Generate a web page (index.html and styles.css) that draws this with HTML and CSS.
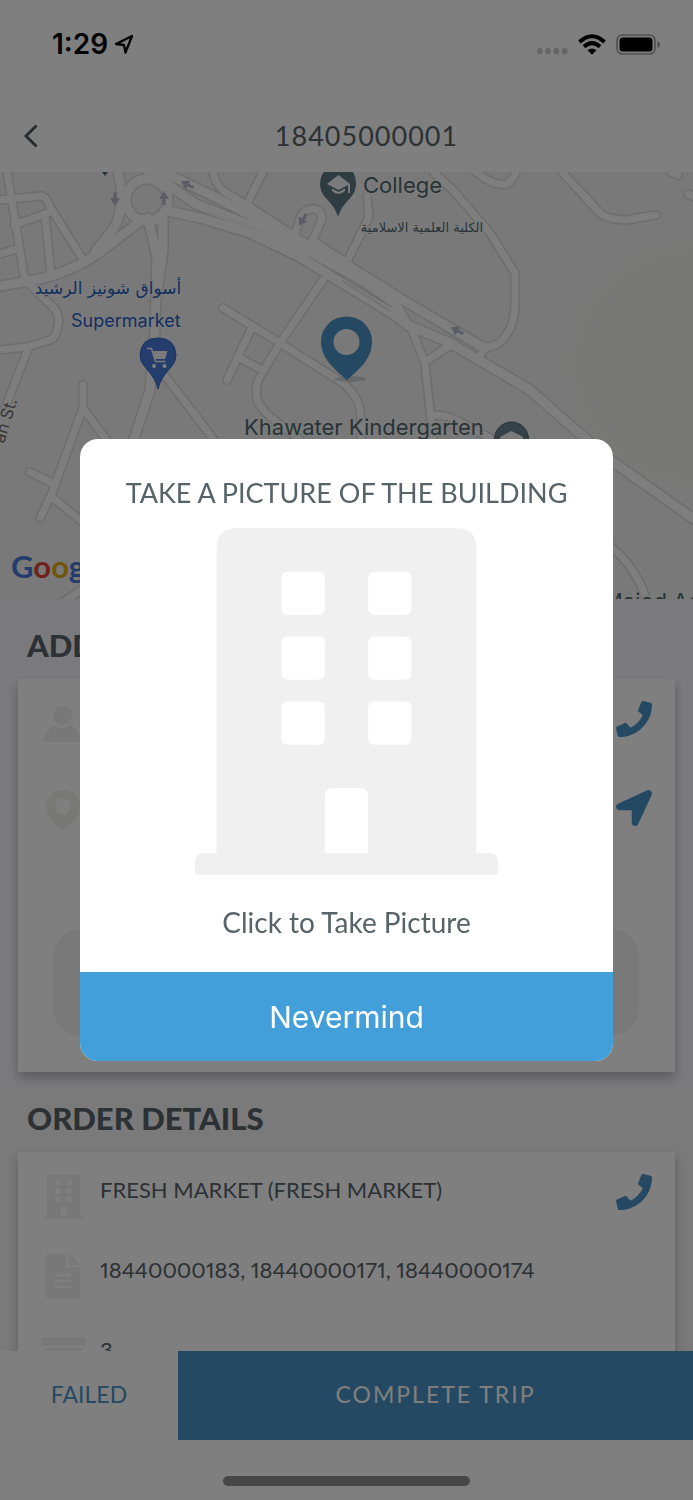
FILE: index.html
```html
<!DOCTYPE html>
<html lang="en">
<head>
<meta charset="utf-8">
<meta name="viewport" content="width=device-width, initial-scale=1">
<title>Trip 18405000001</title>
<link rel="stylesheet" href="styles.css">
</head>
<body>
<svg class="defs" aria-hidden="true">
  <defs>
    <symbol id="building" viewBox="0 0 14 16"><path fill-rule="evenodd" d="M1 15V.9Q1 0 1.9 0H12.1Q13 0 13 .9V15H13.6Q14 15 14 15.4V16H0V15.4Q0 15 .4 15ZM4.3 2Q4 2 4 2.3V3.7Q4 4 4.3 4H5.7Q6 4 6 3.7V2.3Q6 2 5.7 2ZM8.3 2Q8 2 8 2.3V3.7Q8 4 8.3 4H9.7Q10 4 10 3.7V2.3Q10 2 9.7 2ZM4.3 5Q4 5 4 5.3V6.7Q4 7 4.3 7H5.7Q6 7 6 6.7V5.3Q6 5 5.7 5ZM8.3 5Q8 5 8 5.3V6.7Q8 7 8.3 7H9.7Q10 7 10 6.7V5.3Q10 5 9.7 5ZM4.3 8Q4 8 4 8.3V9.7Q4 10 4.3 10H5.7Q6 10 6 9.7V8.3Q6 8 5.7 8ZM8.3 8Q8 8 8 8.3V9.7Q8 10 8.3 10H9.7Q10 10 10 9.7V8.3Q10 8 9.7 8ZM6.4 12Q6 12 6 12.4V15H8V12.4Q8 12 7.6 12Z"/></symbol>
    <symbol id="phone" viewBox="0 0 512 512"><path d="M493.4 24.6l-104-24c-11.3-2.6-22.9 3.3-27.5 13.9l-48 112c-4.2 9.8-1.4 21.3 6.9 28l60.6 49.6c-36 76.7-98.9 140.5-177.2 177.2l-49.6-60.6c-6.8-8.3-18.2-11.1-28-6.9l-112 48C3.9 366.5-2 378.1.6 389.4l24 104C27.1 504.2 36.7 512 48 512c256.1 0 464-207.5 464-464 0-11.2-7.7-20.9-18.6-23.4z"/></symbol>
    <symbol id="arrow" viewBox="0 0 512 512"><path d="M444.52 3.52L28.74 195.42c-47.97 22.39-31.98 92.75 19.19 92.75h175.91v175.91c0 51.17 70.36 67.17 92.75 19.19l191.9-415.78c15.99-38.39-25.59-79.97-63.97-63.97z"/></symbol>
    <radialGradient id="hill"><stop offset=".75" stop-color="#f0f0ea"/><stop offset="1" stop-color="#f2f2f2"/></radialGradient>
    <g id="roads-minor">
      <path d="M7 172L16 226L25 282M0 200L41 196Q46 196 50 207L82 258M0 254L20 248M14 225L50 212M45 215L51 275M213 172Q216 186 225 192L247 205L293 235M263 172L247 204M293 240L301 216Q306 208 315 209Q324 212 321 222L308 250M315 242L350 265M323 280L280 343L259 378Q254 390 258 402Q264 414 285 428L300 440M223 308L280 343L343 383Q352 390 358 402Q362 412 361 440M252 327L227 380M240 358L262 370M30 285L54 308Q60 315 58 325Q57 337 50 340L27 347L0 350M28 349L5 408M83 385V408L52 493L40 518M83 408L108 442M30 472L52 483M52 497L90 528M163 373L218 445M433 172L453 190L490 233L515 273V307Q514 325 506 335Q498 348 484 347M476 172Q490 184 505 185Q511 183 516 172M562 172L600 213Q606 219 626 220L656 215M671 172L678 175M688 194L698 199M367 196L369 217L348 260M412 330L425 363L433 440M452 344L425 362M431 415Q447 414 460 422L490 438M486 347L477 360M613 548Q640 573 648 605M84 588L62 603"/>
    </g>
    <g id="roads-major">
      <path d="M0 286L35 280Q72 272 100 252L143 219M117 168Q127 205 114 228L95 252M148 218L157 257L155 330L150 390L132 445M163 218V250L156 300M168 211L200 218L250 233L300 257L350 288L393 314L410 326L450 343L530 390L580 434L613 462L698 522M140 165L196 204L262 230L310 252L360 279L395 303L408 326M155 168L213 196L293 237L350 267L403 300L484 348"/>
      <circle cx="147" cy="200" r="21"/>
    </g>
    <path id="way" d="M-6 -1.5H0V-5L8 0L0 5V1.5H-6Z"/>
  </defs>
</svg>

<div class="screen">
  <div class="status">
    <div class="status-group">
      <span class="time">1:29</span>
      <svg class="locate" viewBox="0 0 20 20"><path d="M18 2L2 10L10 11L11.500 18.500Z" fill="none" stroke="#000" stroke-width="2.300" stroke-linejoin="round"/></svg>
    </div>
    <div class="status-group icons">
      <svg class="signal" viewBox="0 0 31 8" fill="#cccccc"><rect y="1" width="5.500" height="6.500" rx="2.500"/><rect x="8.300" y="1" width="5.500" height="6.500" rx="2.500"/><rect x="16.600" y="1" width="5.500" height="6.500" rx="2.500"/><rect x="25" y="1" width="5.500" height="6.500" rx="2.500"/></svg>
      <svg class="wifi" viewBox="0 0 28 21"><g fill="none" stroke="#000" stroke-width="4"><path d="M1.500 8Q14-3.500 26.500 8"/><path d="M6 12.800Q14 5.600 22 12.800"/></g><path d="M14 20.800L9.500 16.300Q14 12.500 18.500 16.300Z"/></svg>
      <svg class="battery" viewBox="0 0 44 21"><rect x="1" y="1" width="38" height="19" rx="5.500" fill="none" stroke="#a2a2a2" stroke-width="1.700"/><rect x="3.500" y="3.500" width="33" height="14" rx="3.500"/><path d="M41.500 7Q44 8 44 10.500T41.500 14Z" fill="#999"/></svg>
    </div>
  </div>

  <header class="header">
    <button class="back" type="button" aria-label="Back"><svg viewBox="0 0 14 24"><path d="M12.500 1.500L2 12L12.500 22.500" fill="none" stroke="#4d5a60" stroke-width="3"/></svg></button>
    <h1 class="trip">18405000001</h1>
  </header>

  <svg class="map" viewBox="0 172 693 427" preserveAspectRatio="xMidYMid slice" role="img" aria-label="Map">
    <rect y="172" width="693" height="427" fill="#f2f2f2"/>
    <ellipse cx="700" cy="365" rx="135" ry="125" fill="url(#hill)"/>
    <g fill="none" stroke-linecap="round" stroke-linejoin="round">
      <use href="#roads-minor" class="casing minor-casing"/>
      <use href="#roads-major" class="casing major-casing"/>
      <use href="#roads-minor" class="surface minor-surface"/>
      <use href="#roads-major" class="surface major-surface"/>
      <path d="M343 281L390 311" stroke="#e2e2e2" stroke-width="2"/>
      <path d="M205 211L262 232" stroke="#eeeeee" stroke-width="1"/>
    </g>
    <g fill="#b9b8cc">
      <use href="#way" transform="translate(115 198) rotate(92)"/>
      <use href="#way" transform="translate(164 199) rotate(-90)"/>
      <use href="#way" transform="translate(188 185) rotate(205)"/>
      <use href="#way" transform="translate(303 219) rotate(122)"/>
      <use href="#way" transform="translate(458 331) rotate(208)"/>
      <path d="M102 172H108L105 176Z" fill="#4f6870"/>
    </g>
    <g class="label slate">
      <text class="place" x="363" y="193">College</text>
      <text class="arabic-small" x="422" y="232" text-anchor="middle" direction="rtl" lang="ar">الكلية العلمية الاسلامية</text>
      <text class="place" x="244" y="435">Khawater Kindergarten</text>
      <text class="place" x="603" y="609">Majed Aqel</text>
      <text class="street" transform="translate(4 444) rotate(-73)">an St.</text>
    </g>
    <g class="label blue">
      <text class="arabic" x="108" y="294" text-anchor="middle" direction="rtl" lang="ar">أسواق شونيز الرشيد</text>
      <text class="shop" x="71" y="327">Supermarket</text>
    </g>
    <path d="M338 217Q336 208 325 197Q320 191 320 184Q321 166 338 166Q356 166 356 184Q356 191 351 197Q340 208 338 217Z" fill="#5f7883"/>
    <g fill="#f7f7f7"><path d="M327 184L338.500 175L350 184L338.500 190Z"/><path d="M332 188.500L338.500 192L345 188.500V191Q338.500 197 332 191Z"/><path d="M348 184H350V193H348Z"/></g>
    <path d="M158 389Q156 379 145 367Q140 362 140 355Q141 338 158 338Q175 338 176 355Q176 362 171 367Q160 379 158 389Z" fill="#4a7ad8" stroke="#3468cd"/>
    <path d="M147 348.500H151.500L155.500 361.500H165.500" fill="none" stroke="#f7f7f7" stroke-width="1.500"/>
    <path d="M152.500 351H167.500L165 359H155Z" fill="#f7f7f7"/>
    <circle cx="154" cy="366" r="2" fill="#fff"/><circle cx="164.500" cy="366" r="2" fill="#fff"/>
    <ellipse cx="350" cy="379" rx="16" ry="3" fill="#7f9cae" opacity=".35"/>
    <path fill-rule="evenodd" d="M347 380C333 368 321 358 321 341A25.500 24.500 0 0 1 372 341C372 358 361 368 347 380ZM346.500 329A13 13 0 1 0 346.500 355A13 13 0 1 0 346.500 329Z" fill="#4a92c4"/>
    <circle cx="511.500" cy="439" r="17" fill="#6b8591" stroke="#536b76"/>
    <path d="M500 437L511.500 431L523 437V445H500Z" fill="#f5f5f5"/>
    <text class="google" x="11" y="578"><tspan class="g-blue">G</tspan><tspan class="g-red">o</tspan><tspan class="g-yellow">o</tspan><tspan class="g-blue">g</tspan></text>
  </svg>

  <main class="content">
    <section class="section address">
      <h2 class="section-title">ADDRESS</h2>
      <div class="card">
        <div class="row">
          <span class="icon"><svg class="person" viewBox="0 0 38 36"><circle cx="18.500" cy="9.500" r="9.500"/><path d="M0 36Q1 25 10 19Q18.500 25 27 19Q36 25 37 36Z"/></svg></span>
          <span class="text"></span>
          <button class="action" type="button" aria-label="Call customer"><svg><use href="#phone"/></svg></button>
        </div>
        <div class="row">
          <span class="icon"><svg class="pin" viewBox="0 0 34 41"><path fill-rule="evenodd" d="M17 41C7 33 0 27 0 17A17 17 0 0 1 34 17C34 27 27 33 17 41ZM17 8.500A8 8 0 1 0 17 24.500A8 8 0 1 0 17 8.500Z"/></svg></span>
          <span class="text"></span>
          <button class="action" type="button" aria-label="Navigate"><svg><use href="#arrow"/></svg></button>
        </div>
        <div class="note"></div>
      </div>
    </section>

    <section class="section order">
      <h2 class="section-title">ORDER DETAILS</h2>
      <div class="card">
        <div class="row">
          <span class="icon"><svg class="store"><use href="#building"/></svg></span>
          <span class="text">FRESH MARKET (FRESH MARKET)</span>
          <button class="action" type="button" aria-label="Call store"><svg><use href="#phone"/></svg></button>
        </div>
        <div class="row">
          <span class="icon"><svg class="doc" viewBox="0 0 34 45"><path fill-rule="evenodd" d="M2 0H20V13.500H34V43Q34 45 32 45H2Q0 45 0 43V2Q0 0 2 0ZM8.500 20V22.500H25.500V20ZM8.500 26V28.500H25.500V26ZM8.500 31.500V34H25.500V31.500Z"/><path d="M23 0L34 11H23Z"/></svg></span>
          <span class="text">18440000183, 18440000171, 18440000174</span>
        </div>
        <div class="row">
          <span class="icon"><svg class="box" viewBox="0 0 44 38"><rect width="44" height="9" rx="1.500"/><path d="M3 11H41V36Q41 38 39 38H5Q3 38 3 36Z"/></svg></span>
          <span class="text">3</span>
        </div>
      </div>
    </section>
  </main>

  <footer class="footer">
    <div class="buttons">
      <button class="failed" type="button">FAILED</button>
      <button class="complete" type="button">COMPLETE TRIP</button>
    </div>
    <div class="home"><span class="home-bar"></span></div>
  </footer>
</div>

<div class="overlay">
  <div class="dialog" role="dialog" aria-modal="true" aria-labelledby="dialog-title">
    <h2 class="dialog-title" id="dialog-title">TAKE A PICTURE OF THE BUILDING</h2>
    <button class="capture" type="button">
      <svg><use href="#building"/></svg>
      <span>Click to Take Picture</span>
    </button>
    <button class="nevermind" type="button">Nevermind</button>
  </div>
</div>
</body>
</html>
```

FILE: styles.css
```css
* { box-sizing: border-box; }

body {
  margin: 0;
  background: #fff;
  color: #566369;
  font-family: Lato, "Liberation Sans", sans-serif;
}

button {
  margin: 0;
  padding: 0;
  border: 0;
  background: none;
  color: inherit;
  font: inherit;
  cursor: pointer;
}

svg { display: block; }

h1, h2 { margin: 0; }

.defs { position: absolute; width: 0; height: 0; }

.screen {
  display: flex;
  flex-direction: column;
  height: 100vh;
  overflow: hidden;
}

/* Status bar */
.status {
  flex: none;
  display: flex;
  align-items: center;
  justify-content: space-between;
  height: 88px;
  padding: 0 33px 0 52px;
}

.status-group { display: flex; align-items: center; gap: 6px; }
.icons { gap: 10px; }

.time {
  color: #000;
  font: 600 28px/32px Inter, "Liberation Sans", sans-serif;
}

.locate { width: 20px; height: 20px; }
.signal { width: 31px; height: 8px; margin-top: 14px; }
.wifi { width: 28px; height: 21px; }
.battery { width: 44px; height: 21px; }

/* Header */
.header {
  flex: none;
  display: flex;
  align-items: center;
  height: 84px;
  padding-top: 12px;
}

.back { width: 40px; padding-left: 24px; }
.back svg { width: 14px; height: 24px; }

.trip {
  flex: 1;
  text-align: center;
  font-size: 27px;
  font-weight: 400;
  line-height: 36px;
  letter-spacing: 1px;
}

/* Map */
.map { flex: none; width: 100%; height: 427px; }

.casing { stroke: #dadada; }
.surface { stroke: #fdfdfd; }
.minor-casing { stroke-width: 10px; }
.minor-surface { stroke-width: 7px; }
.major-casing { stroke-width: 12px; }
.major-surface { stroke-width: 9px; }

.label {
  font-family: Inter, "Liberation Sans", sans-serif;
  stroke: #f6f6f6;
  stroke-width: 3px;
  stroke-linejoin: round;
  paint-order: stroke;
}

.slate { fill: #4f6870; }
.blue { fill: #2460c0; }
.place { font-size: 22px; }
.shop { font-size: 18px; }
.street { font-size: 17px; fill: #707070; }
.arabic { font-family: "DejaVu Sans", sans-serif; font-size: 17px; }
.arabic-small { font-family: "DejaVu Sans", sans-serif; font-size: 13px; }

.google { font-size: 31px; font-weight: 700; font-family: Lato, sans-serif; }
.g-blue { fill: #4779dc; }
.g-red { fill: #dc4437; }
.g-yellow { fill: #e2aa10; }

/* Details */
.content { flex: 1; min-height: 0; overflow: hidden; }

.section { padding: 0 18px; }
.address { padding-bottom: 17px; background: #f5f5f9; }
.order { background: #f4f4f4; }

.section-title {
  padding: 26px 9px 14px;
  font-size: 31px;
  font-weight: 900;
  line-height: 40px;
}

.order .section-title { padding-top: 9px; }

.card {
  display: flex;
  flex-direction: column;
  gap: 35px;
  padding: 22px 0 36px;
  background: #fff;
  box-shadow: 0 6px 10px rgba(0, 0, 0, .25);
}

.address .card { gap: 44px; }

.row {
  display: flex;
  align-items: flex-start;
  gap: 14px;
  height: 45px;
  padding: 0 23px 0 22px;
}

.icon { display: flex; flex: none; justify-content: center; width: 46px; fill: #f0f0f0; }
.person { width: 38px; height: 36px; margin-top: 5px; }
.pin { width: 34px; height: 41px; fill: #f1f1ed; }
.store { width: 39px; height: 45px; }
.doc { width: 34px; height: 45px; }
.box { width: 44px; height: 38px; margin-top: 3px; }

.text {
  flex: 1;
  font-size: 22px;
  font-variant-numeric: proportional-nums;
  line-height: 32px;
}

.action { flex: none; }
.action svg { width: 36px; height: 36px; fill: #4a92c4; }

.note {
  height: 107px;
  margin: 50px 36px 0 35px;
  border-radius: 28px;
  background: #f2f2f5;
}

/* Bottom bar */
.footer { flex: none; background: #fff; }
.buttons { display: flex; height: 89px; font-size: 23px; }
.buttons button { padding-bottom: 4px; }
.failed { flex: 178; color: #4a92c4; }
.complete { flex: 515; background: #4a92c4; color: #fff; letter-spacing: 2px; }

.home { display: flex; justify-content: center; padding: 36px 0 14px; }
.home-bar { width: 247px; height: 10px; border-radius: 5px; background: #8f8f8f; }

/* Dialog */
.overlay {
  position: fixed;
  inset: 0;
  display: flex;
  align-items: center;
  justify-content: center;
  background: rgba(0, 0, 0, .5);
}

.dialog {
  display: flex;
  flex-direction: column;
  width: 77%;
  overflow: hidden;
  border-radius: 18px;
  background: #fff;
}

.dialog-title {
  padding: 36px 0 17px;
  text-align: center;
  font-size: 27px;
  font-weight: 400;
  line-height: 36px;
}

.capture {
  display: flex;
  flex-direction: column;
  align-items: center;
  gap: 29px;
  padding-bottom: 32px;
  font-size: 28px;
  line-height: 36px;
}

.capture svg { width: 303px; height: 347px; fill: #f0f0f0; }

.nevermind {
  height: 89px;
  background: #439fd9;
  color: #fff;
  font-family: Inter, "Liberation Sans", sans-serif;
  font-size: 30px;
}
```
